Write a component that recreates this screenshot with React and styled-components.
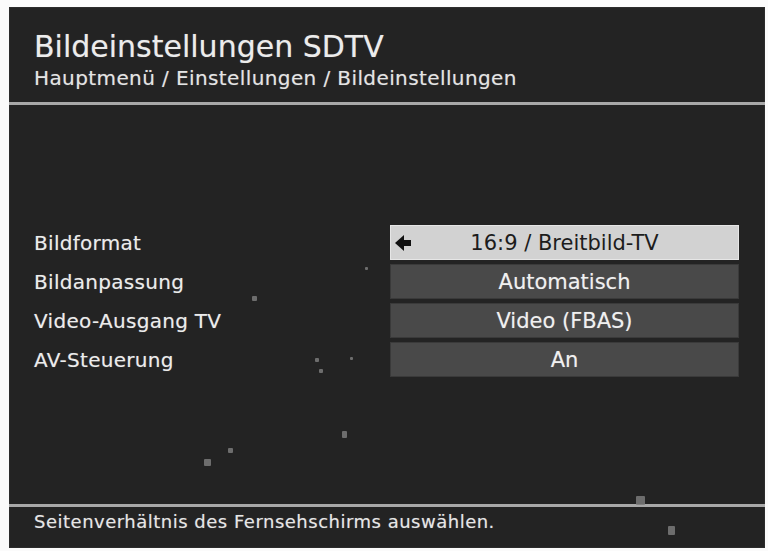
import React from "react";
import styled, { createGlobalStyle } from "styled-components";

const GlobalStyle = createGlobalStyle`
  html, body {
    margin: 0;
    padding: 0;
    background: #fbfbfb;
  }
  body {
    font-family: "DejaVu Sans", "Liberation Sans", sans-serif;
  }
`;

const Page = styled.div`
  width: 768px;
  height: 551px;
  padding: 7px 3px 3px 9px;
  box-sizing: border-box;
  background: #fbfbfb;
`;

const Screen = styled.div`
  position: relative;
  height: 541px;
  width: 756px;
  background: #232323;
  display: flex;
  flex-direction: column;
  color: #ececec;
  overflow: hidden;
  box-shadow: inset 0 0 0 1px #2c2c2c;
  text-shadow: 0 0 1px rgba(255, 255, 255, 0.35);
`;

const Header = styled.header`
  height: 98px;
  box-sizing: border-box;
  padding: 23px 25px 0;
  border-bottom: 3px solid #a8a8a8;
`;

const Title = styled.h1`
  margin: 0;
  font-size: 30px;
  font-weight: normal;
  line-height: 34px;
`;

const Crumbs = styled.div`
  font-size: 20px;
  line-height: 24px;
  letter-spacing: 0.4px;
  margin-top: 2px;
  color: #e4e4e4;
`;

const Body = styled.main`
  flex: 1;
  padding: 120px 26px 0 25px;
`;

const Options = styled.div`
  display: grid;
  grid-template-columns: 1fr 349px;
  grid-auto-rows: 35px;
  row-gap: 4px;
`;

const Label = styled.div`
  display: flex;
  align-items: center;
  font-size: 20px;
  letter-spacing: 0.3px;
  color: #ececec;
`;

const Value = styled.div`
  position: relative;
  display: flex;
  align-items: center;
  justify-content: center;
  font-size: 21px;
  box-sizing: border-box;
  background: ${(p) => (p.$active ? "#d2d2d2" : "#494949")};
  color: ${(p) => (p.$active ? "#1c1c1c" : "#f0f0f0")};
  border: 1px solid ${(p) => (p.$active ? "#e6e6e6" : "#3a3a3a")};
  text-shadow: ${(p) => (p.$active ? "none" : "0 0 1px rgba(255,255,255,0.35)")};
`;

const Arrow = styled.svg`
  position: absolute;
  left: 4px;
  top: 50%;
  transform: translateY(-50%);
`;

const Footer = styled.footer`
  height: 44px;
  box-sizing: border-box;
  border-top: 3px solid #a8a8a8;
  padding: 3px 25px 0;
  font-size: 18px;
  letter-spacing: 0.5px;
  line-height: 24px;
  color: #e6e6e6;
`;

const Speck = styled.span`
  position: absolute;
  background: #7a7a7a;
  border-radius: 1px;
  opacity: 0.85;
`;

const options = [
  { label: "Bildformat", value: "16:9 / Breitbild-TV", active: true },
  { label: "Bildanpassung", value: "Automatisch" },
  { label: "Video-Ausgang TV", value: "Video (FBAS)" },
  { label: "AV-Steuerung", value: "An" },
];

// noise dots from the captured picture, panel coordinates
const specks = [
  [243, 289, 5, 5],
  [356, 260, 3, 3],
  [195, 452, 7, 7],
  [219, 441, 5, 5],
  [333, 424, 5, 7],
  [306, 351, 4, 4],
  [310, 362, 4, 4],
  [341, 350, 3, 3],
  [627, 489, 9, 9],
  [659, 519, 7, 9],
];

export default function App() {
  return (
    <>
      <GlobalStyle />
      <Page>
        <Screen>
          <Header>
            <Title>Bildeinstellungen SDTV</Title>
            <Crumbs>Hauptmenü / Einstellungen / Bildeinstellungen</Crumbs>
          </Header>
          <Body>
            <Options>
              {options.map((o) => (
                <React.Fragment key={o.label}>
                  <Label>{o.label}</Label>
                  <Value $active={o.active}>
                    {o.active && (
                      <Arrow width="18" height="16" viewBox="0 0 18 16">
                        <path d="M0 8 L9 0 L9 5 L16 5 L16 11 L9 11 L9 16 Z" fill="#111" />
                      </Arrow>
                    )}
                    {o.value}
                  </Value>
                </React.Fragment>
              ))}
            </Options>
          </Body>
          <Footer>Seitenverhältnis des Fernsehschirms auswählen.</Footer>
          {specks.map(([x, y, w, h], i) => (
            <Speck key={i} style={{ left: x, top: y, width: w, height: h }} />
          ))}
        </Screen>
      </Page>
    </>
  );
}
